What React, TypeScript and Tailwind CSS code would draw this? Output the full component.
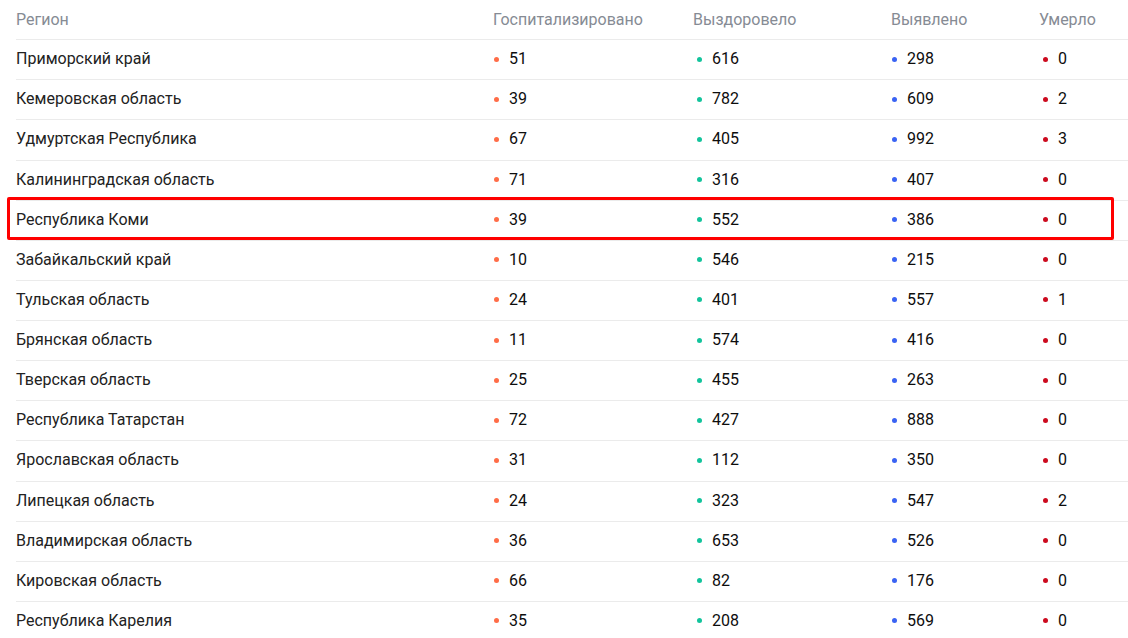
const rows: [string, number, number, number, number][] = [
  ["Приморский край", 51, 616, 298, 0],
  ["Кемеровская область", 39, 782, 609, 2],
  ["Удмуртская Республика", 67, 405, 992, 3],
  ["Калининградская область", 71, 316, 407, 0],
  ["Республика Коми", 39, 552, 386, 0],
  ["Забайкальский край", 10, 546, 215, 0],
  ["Тульская область", 24, 401, 557, 1],
  ["Брянская область", 11, 574, 416, 0],
  ["Тверская область", 25, 455, 263, 0],
  ["Республика Татарстан", 72, 427, 888, 0],
  ["Ярославская область", 31, 112, 350, 0],
  ["Липецкая область", 24, 323, 547, 2],
  ["Владимирская область", 36, 653, 526, 0],
  ["Кировская область", 66, 82, 176, 0],
  ["Республика Карелия", 35, 208, 569, 0],
];

const grid = "grid grid-cols-[477px_200px_198px_148px_1fr] h-[40.14px] items-center border-b border-[#ebebeb] pb-px";

function Value({ value, dot, pad }: { value: number; dot: string; pad: string }) {
  return (
    <div className={`flex items-center ${pad}`}>
      <span className={`w-[5px] h-[5px] rounded-full ${dot} mr-[10px]`} />
      <span className="text-[#0d0d0d]">{value}</span>
    </div>
  );
}

export default function App() {
  return (
    <div
      className="relative h-[638px] overflow-hidden bg-white pl-4 text-[16px]"
      style={{ fontFamily: "Roboto, 'Liberation Sans', sans-serif" }}
    >
      <div className={`${grid} text-[#868b94] pt-px`}>
        <div>Регион</div>
        <div>Госпитализировано</div>
        <div>Выздоровело</div>
        <div>Выявлено</div>
        <div>Умерло</div>
      </div>
      {rows.map(([name, hosp, rec, found, died]) => (
        <div key={name} className={grid}>
          <div className="text-[#222]">{name}</div>
          <Value value={hosp} dot="bg-[#ff6c47]" pad="pl-px" />
          <Value value={rec} dot="bg-[#12c49c]" pad="pl-1" />
          <Value value={found} dot="bg-[#3a63f3]" pad="pl-px" />
          <Value value={died} dot="bg-[#cc0a1e]" pad="pl-1" />
        </div>
      ))}

      {/* выделение */}
      <div className="absolute left-[7px] top-[197px] w-[1107px] h-[43px] border-[3px] border-[#ff0000] rounded-[2px] pointer-events-none" />
    </div>
  );
}
